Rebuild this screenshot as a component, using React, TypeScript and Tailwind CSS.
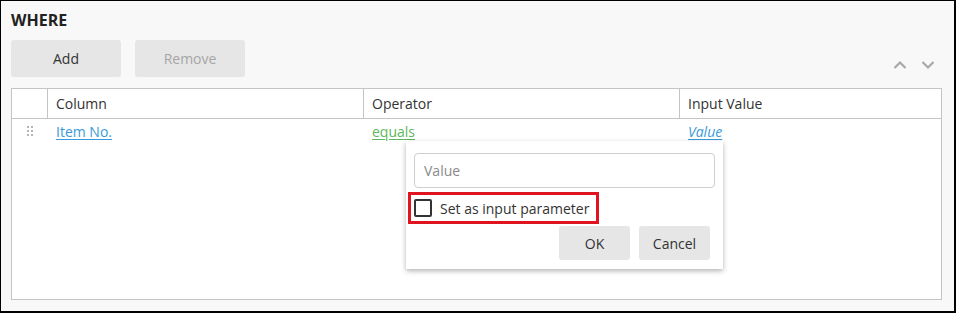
import React from 'react';

const font = { fontFamily: '"Open Sans", "Noto Sans", sans-serif' };

const Chevron = ({ up }: { up?: boolean }) => (
  <svg width="14" height="10" viewBox="0 0 14 10" className="block">
    <path
      d={up ? 'M1.5 8 L7 2.5 L12.5 8' : 'M1.5 2 L7 7.5 L12.5 2'}
      fill="none"
      stroke="#a8a8a8"
      strokeWidth="2.2"
    />
  </svg>
);

const DragHandle = () => (
  <div className="grid grid-cols-2 gap-x-[2px] gap-y-[2px]">
    {[0, 1, 2, 3, 4, 5].map((i) => (
      <div key={i} className="w-[2px] h-[2px] bg-[#b5b5b5]" />
    ))}
  </div>
);

export default function App() {
  return (
    <div
      className="w-[956px] h-[313px] bg-[#f8f8f8] border-t border-l border-r-2 border-b-2 border-black flex flex-col text-[#333] text-[14px]"
      style={font}
    >
      <div className="px-[10px] pt-[9px] font-bold text-[16px] leading-[21px] text-[#222]">WHERE</div>

      {/* toolbar */}
      <div className="flex items-end pl-[10px] pr-[12px] mt-[9px]">
        <button className="w-[110px] h-[37px] rounded-[3px] bg-[#e6e6e6] text-[#333] text-[14px]">Add</button>
        <button className="ml-[14px] w-[110px] h-[37px] rounded-[3px] bg-[#e6e6e6] text-[#a5a5a5] text-[14px]">Remove</button>
        <div className="ml-auto flex items-center gap-[14px] mr-[7px] mb-[7px]">
          <Chevron up />
          <Chevron />
        </div>
      </div>

      {/* table */}
      <div className="relative ml-[10px] mr-[12px] mt-[11px] h-[212px] bg-white border border-[#c4c4c4]">
        <div className="flex h-[30px] border-b border-[#c4c4c4] leading-[29px]">
          <div className="w-[36px] border-r border-[#c4c4c4]" />
          <div className="w-[316px] border-r border-[#c4c4c4] pl-[8px]">Column</div>
          <div className="w-[316px] border-r border-[#c4c4c4] pl-[8px]">Operator</div>
          <div className="flex-1 pl-[8px]">Input Value</div>
        </div>
        <div className="flex h-[24px] items-center">
          <div className="w-[36px] pl-[15px] flex items-center">
            <DragHandle />
          </div>
          <div className="w-[316px] pl-[8px]">
            <span className="text-[#3a9ad9] underline underline-offset-2">Item No.</span>
          </div>
          <div className="w-[316px] pl-[8px]">
            <span className="text-[#5cb85c] underline underline-offset-2">equals</span>
          </div>
          <div className="flex-1 pl-[8px]">
            <span className="text-[#3a9ad9] italic underline underline-offset-2">Value</span>
          </div>
        </div>

        {/* popup */}
        <div className="absolute left-[394px] top-[52px] w-[317px] h-[128px] bg-white shadow-[0_2px_5px_rgba(0,0,0,0.3)] px-[8px] pt-[12px]">
          <div className="h-[35px] border border-[#cfcfcf] rounded-[4px] flex items-center pl-[9px] text-[#8a8a8a]">
            Value
          </div>
          <div className="mt-[4px] -ml-[6px] w-[191px] h-[32px] border-[3px] border-[#e0141e] flex items-center pl-[3px]">
            <div className="w-[18px] h-[18px] border-2 border-[#333] rounded-[2px]" />
            <span className="ml-[8px] text-[#333]">Set as input parameter</span>
          </div>
          <div className="flex justify-end gap-[9px] mt-[2px] pr-[5px]">
            <button className="w-[71px] h-[34px] rounded-[3px] bg-[#e6e6e6] text-[#333]">OK</button>
            <button className="w-[71px] h-[34px] rounded-[3px] bg-[#e6e6e6] text-[#333]">Cancel</button>
          </div>
        </div>
      </div>
    </div>
  );
}
